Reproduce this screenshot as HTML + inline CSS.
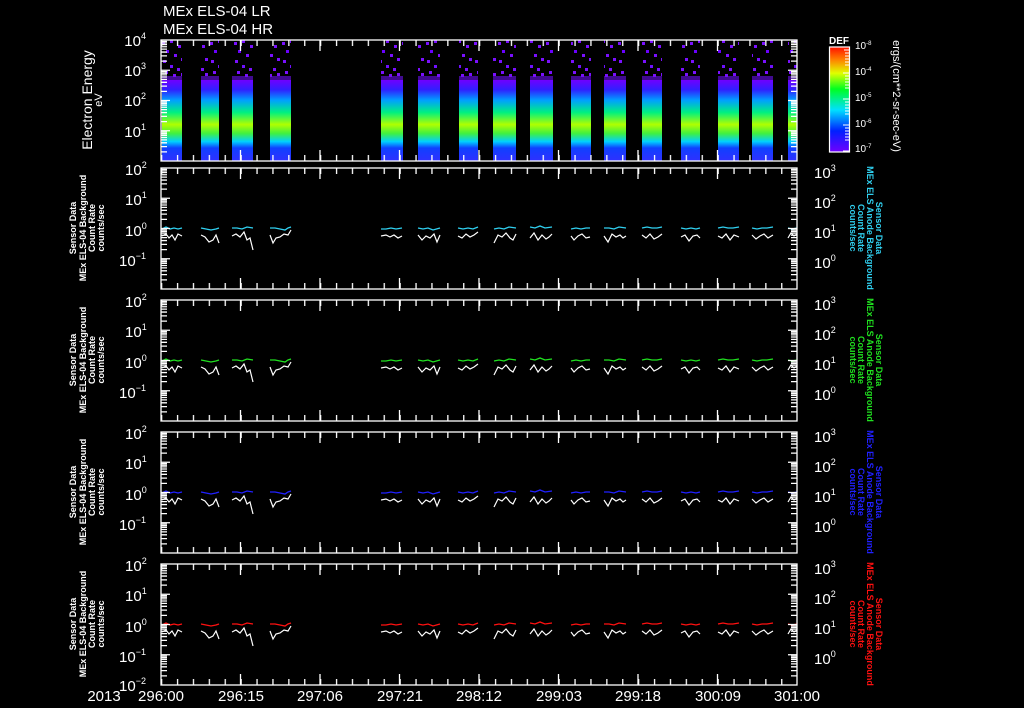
<!DOCTYPE html>
<html><head><meta charset="utf-8"><style>
html,body{margin:0;padding:0;background:#000;width:1024px;height:708px;overflow:hidden}
svg{display:block}
text{font-family:"Liberation Sans",sans-serif;fill:#fff}
</style></head><body>
<svg width="1024" height="708" viewBox="0 0 1024 708" xmlns="http://www.w3.org/2000/svg">
<defs>
<pattern id="mt" width="15.9" height="130" patternUnits="userSpaceOnUse"><rect x="0" y="0" width="1.3" height="6" fill="#fff"/><rect x="0" y="115" width="1.3" height="6" fill="#fff"/></pattern>
<pattern id="dots" width="24" height="40" patternUnits="userSpaceOnUse">
<rect x="1" y="2" width="3" height="3" fill="#7a10ff"/><rect x="9" y="0" width="3" height="3" fill="#7a10ff"/><rect x="17" y="5" width="3" height="3" fill="#7a10ff"/><rect x="5" y="10" width="3" height="3" fill="#6a00ff"/><rect x="13" y="14" width="3" height="3" fill="#7a10ff"/><rect x="20" y="18" width="3" height="3" fill="#7a10ff"/><rect x="2" y="20" width="3" height="3" fill="#7a10ff"/><rect x="9" y="25" width="3" height="3" fill="#7010ff"/><rect x="16" y="28" width="3" height="3" fill="#7a10ff"/><rect x="4" y="31" width="3" height="3" fill="#7a10ff"/><rect x="12" y="34" width="3" height="3" fill="#7a10ff"/><rect x="20" y="33" width="3" height="3" fill="#7a10ff"/><rect x="0" y="36" width="24" height="4" fill="#6a10f0" opacity=".6"/>
</pattern>
<linearGradient id="sg" x1="0" y1="0" x2="0" y2="1">
<stop offset="0" stop-color="#7000ff"/><stop offset=".12" stop-color="#3020ff"/><stop offset=".25" stop-color="#00a0ff"/><stop offset=".4" stop-color="#00f080"/><stop offset=".55" stop-color="#b0ff00"/><stop offset=".66" stop-color="#40f040"/><stop offset=".76" stop-color="#00d0ff"/><stop offset=".84" stop-color="#1040ff"/><stop offset="1" stop-color="#3030ff"/>
</linearGradient>
<g id="fr" fill="none" stroke="#fff" stroke-width="1.3">
<rect x="0" y="0" width="636" height="121"/>
<path d="M0 30.25h9M0 60.5h9M0 90.75h9M636 30.25h-9M636 60.5h-9M636 90.75h-9"/>
<path id="mn" d="M0 111.9h6M0 106.6h6M0 102.8h6M0 99.9h6M0 97.5h6M0 95.4h6M0 93.7h6M0 92.1h6M0 81.65h6M0 76.35h6M0 72.55h6M0 69.65h6M0 67.25h6M0 65.15h6M0 63.45h6M0 61.85h6M0 51.4h6M0 46.1h6M0 42.3h6M0 39.4h6M0 37h6M0 34.9h6M0 33.2h6M0 31.6h6M0 21.15h6M0 15.85h6M0 12.05h6M0 9.15h6M0 6.75h6M0 4.65h6M0 2.95h6M0 1.35h6"/>
<path d="M79.5 0v11M159 0v11M238.5 0v11M318 0v11M397.5 0v11M477 0v11M556.5 0v11M79.5 121v-11M159 121v-11M238.5 121v-11M318 121v-11M397.5 121v-11M477 121v-11M556.5 121v-11"/>
<use href="#mn" transform="translate(636,0) scale(-1,1)"/>
<rect x="0" y="0" width="636" height="121" fill="url(#mt)" stroke="none"/>
</g>
<g id="wl" fill="none" stroke="#fff" stroke-width="1.2">
<polyline points="1,68 5,66 8,70 11,67 14,72 17,66 21,68"/>
<polyline points="40,67 44,69 48,74 52,72 55,67 58,75"/>
<polyline points="71,68 75,66 79,69 83,64 86,72 89,70 92,82"/>
<polyline points="109,67 112,75 115,70 119,69 123,66 127,67 130,62"/>
<polyline points="220,68 225,67 229,69 233,67 237,70 241,68"/>
<polyline points="257,67 261,72 265,68 269,70 273,66 276,74 279,67"/>
<polyline points="297,68 301,70 305,66 309,69 313,67 317,64"/>
<polyline points="333,75 337,67 341,69 345,65 349,70 352,72 355,66"/>
<polyline points="369,70 373,65 377,72 381,67 385,71 388,69 391,66"/>
<polyline points="410,68 413,72 417,68 421,66 425,70 429,69"/>
<polyline points="443,68 447,74 451,66 455,69 459,67 462,70 465,68"/>
<polyline points="481,67 485,70 489,66 493,71 497,69 501,66"/>
<polyline points="520,69 524,67 528,73 532,68 536,67 539,70"/>
<polyline points="557,68 561,70 565,66 569,72 573,67 578,69"/>
<polyline points="591,67 595,71 599,68 603,66 607,70 612,67"/>
<polyline points="627,70 630,65 633,68 636,66"/>
</g>
<g id="cl" fill="none" stroke="currentColor" stroke-width="1.3" transform="translate(0,2)">
<polyline points="1,59 5,57 9,59 13,58 17,59 21,58"/>
<polyline points="40,58 45,59 50,60 55,59 58,58"/>
<polyline points="71,58 76,58 81,59 86,57 92,58"/>
<polyline points="109,58 114,58 119,59 124,60 127,58 130,57"/>
<polyline points="220,59 225,59 230,58 235,59 241,58"/>
<polyline points="257,58 262,59 267,58 272,60 279,58"/>
<polyline points="297,58 302,59 307,58 312,59 317,57"/>
<polyline points="333,59 338,58 343,59 348,57 355,58"/>
<polyline points="369,57 374,58 379,56 384,58 391,57"/>
<polyline points="410,59 415,58 420,59 425,58 429,58"/>
<polyline points="443,58 448,58 453,59 458,57 465,58"/>
<polyline points="481,58 486,57 491,58 496,58 501,57"/>
<polyline points="520,58 525,59 530,58 535,59 539,58"/>
<polyline points="557,58 562,57 567,58 572,58 578,57"/>
<polyline points="591,58 596,59 601,58 606,58 612,57"/>
<polyline points="627,58 631,59 636,58"/>
</g>
<linearGradient id="cb" x1="0" y1="1" x2="0" y2="0">
<stop offset="0" stop-color="#7000ff"/><stop offset=".2" stop-color="#0020ff"/><stop offset=".4" stop-color="#00e0ff"/><stop offset=".6" stop-color="#00ff20"/><stop offset=".75" stop-color="#e0ff00"/><stop offset=".88" stop-color="#ff8000"/><stop offset="1" stop-color="#ff1000"/>
</linearGradient>
</defs>

<text x="163" y="16" font-size="15">MEx ELS-04 LR</text>
<text x="163" y="34" font-size="15">MEx ELS-04 HR</text>

<g transform="translate(161,40)">
<g>
<rect x="1" y="0" width="20" height="40" fill="url(#dots)"/><rect x="1" y="40" width="20" height="81" fill="url(#sg)"/>
<rect x="40" y="0" width="18" height="40" fill="url(#dots)"/><rect x="40" y="40" width="18" height="81" fill="url(#sg)"/>
<rect x="71" y="0" width="21" height="40" fill="url(#dots)"/><rect x="71" y="40" width="21" height="81" fill="url(#sg)"/>
<rect x="109" y="0" width="21" height="40" fill="url(#dots)"/><rect x="109" y="40" width="21" height="81" fill="url(#sg)"/>
<rect x="220" y="0" width="22" height="40" fill="url(#dots)"/><rect x="220" y="40" width="22" height="81" fill="url(#sg)"/>
<rect x="257" y="0" width="22" height="40" fill="url(#dots)"/><rect x="257" y="40" width="22" height="81" fill="url(#sg)"/>
<rect x="298" y="0" width="19" height="40" fill="url(#dots)"/><rect x="298" y="40" width="19" height="81" fill="url(#sg)"/>
<rect x="332" y="0" width="23" height="40" fill="url(#dots)"/><rect x="332" y="40" width="23" height="81" fill="url(#sg)"/>
<rect x="369" y="0" width="23" height="40" fill="url(#dots)"/><rect x="369" y="40" width="23" height="81" fill="url(#sg)"/>
<rect x="410" y="0" width="20" height="40" fill="url(#dots)"/><rect x="410" y="40" width="20" height="81" fill="url(#sg)"/>
<rect x="443" y="0" width="22" height="40" fill="url(#dots)"/><rect x="443" y="40" width="22" height="81" fill="url(#sg)"/>
<rect x="481" y="0" width="20" height="40" fill="url(#dots)"/><rect x="481" y="40" width="20" height="81" fill="url(#sg)"/>
<rect x="520" y="0" width="19" height="40" fill="url(#dots)"/><rect x="520" y="40" width="19" height="81" fill="url(#sg)"/>
<rect x="557" y="0" width="21" height="40" fill="url(#dots)"/><rect x="557" y="40" width="21" height="81" fill="url(#sg)"/>
<rect x="591" y="0" width="21" height="40" fill="url(#dots)"/><rect x="591" y="40" width="21" height="81" fill="url(#sg)"/>
<rect x="627" y="0" width="9" height="40" fill="url(#dots)"/><rect x="627" y="40" width="9" height="81" fill="url(#sg)"/>
</g>
<use href="#fr"/>
</g>

<g transform="translate(161,168)"><use href="#wl"/><use href="#cl" style="color:#30d0f0"/><use href="#fr"/></g>
<g transform="translate(161,300)"><use href="#wl"/><use href="#cl" style="color:#20e020"/><use href="#fr"/></g>
<g transform="translate(161,432)"><use href="#wl"/><use href="#cl" style="color:#2020ff"/><use href="#fr"/></g>
<g transform="translate(161,564)"><use href="#wl"/><use href="#cl" style="color:#ff1010"/><use href="#fr"/></g>

<g font-size="15" text-anchor="end">
<text x="146" y="46">10<tspan font-size="9" dy="-7">4</tspan></text>
<text x="146" y="76">10<tspan font-size="9" dy="-7">3</tspan></text>
<text x="146" y="106">10<tspan font-size="9" dy="-7">2</tspan></text>
<text x="146" y="137">10<tspan font-size="9" dy="-7">1</tspan></text>
</g>
<g font-size="15" id="la">
<text x="125" y="175">10<tspan font-size="9" dy="-7">2</tspan></text>
<text x="125" y="205">10<tspan font-size="9" dy="-7">1</tspan></text>
<text x="125" y="236">10<tspan font-size="9" dy="-7">0</tspan></text>
<text x="119" y="266">10<tspan font-size="9" dy="-7">−1</tspan></text>
</g>
<use href="#la" y="132"/><use href="#la" y="264"/><use href="#la" y="396"/>
<text x="119" y="691" font-size="15">10<tspan font-size="9" dy="-7">−2</tspan></text>

<g font-size="15" id="ra">
<text x="814" y="178">10<tspan font-size="9" dy="-7">3</tspan></text>
<text x="814" y="208">10<tspan font-size="9" dy="-7">2</tspan></text>
<text x="814" y="238">10<tspan font-size="9" dy="-7">1</tspan></text>
<text x="814" y="268">10<tspan font-size="9" dy="-7">0</tspan></text>
</g>
<use href="#ra" y="132"/><use href="#ra" y="264"/><use href="#ra" y="396"/>

<text transform="translate(92,100) rotate(-90)" font-size="14" text-anchor="middle">Electron Energy</text>
<text transform="translate(102,100) rotate(-90)" font-size="11" text-anchor="middle">eV</text>
<g id="lt" font-size="9" font-weight="bold" text-anchor="middle">
<text transform="translate(76,228) rotate(-90)">Sensor Data</text>
<text transform="translate(86,228) rotate(-90)">MEx ELS-04 Background</text>
<text transform="translate(95,228) rotate(-90)">Count Rate</text>
<text transform="translate(104,228) rotate(-90)">counts/sec</text>
</g>
<use href="#lt" y="132"/><use href="#lt" y="264"/><use href="#lt" y="396"/>

<g font-size="9" font-weight="bold" text-anchor="middle">
<g style="fill:#30d0f0">
<text transform="translate(876,228) rotate(90)" style="fill:inherit">Sensor Data</text>
<text transform="translate(867,228) rotate(90)" style="fill:inherit">MEx ELS Anode Background</text>
<text transform="translate(858,228) rotate(90)" style="fill:inherit">Count Rate</text>
<text transform="translate(850,228) rotate(90)" style="fill:inherit">counts/sec</text>
</g>
<g style="fill:#20e020" transform="translate(0,132)">
<text transform="translate(876,228) rotate(90)" style="fill:inherit">Sensor Data</text>
<text transform="translate(867,228) rotate(90)" style="fill:inherit">MEx ELS Anode Background</text>
<text transform="translate(858,228) rotate(90)" style="fill:inherit">Count Rate</text>
<text transform="translate(850,228) rotate(90)" style="fill:inherit">counts/sec</text>
</g>
<g style="fill:#2020ff" transform="translate(0,264)">
<text transform="translate(876,228) rotate(90)" style="fill:inherit">Sensor Data</text>
<text transform="translate(867,228) rotate(90)" style="fill:inherit">MEx ELS Anode Background</text>
<text transform="translate(858,228) rotate(90)" style="fill:inherit">Count Rate</text>
<text transform="translate(850,228) rotate(90)" style="fill:inherit">counts/sec</text>
</g>
<g style="fill:#ff1010" transform="translate(0,396)">
<text transform="translate(876,228) rotate(90)" style="fill:inherit">Sensor Data</text>
<text transform="translate(867,228) rotate(90)" style="fill:inherit">MEx ELS Anode Background</text>
<text transform="translate(858,228) rotate(90)" style="fill:inherit">Count Rate</text>
<text transform="translate(850,228) rotate(90)" style="fill:inherit">counts/sec</text>
</g>
</g>

<text x="829" y="44" font-size="10" font-weight="bold">DEF</text>
<rect x="829.5" y="47" width="20" height="105" fill="url(#cb)" stroke="#fff" stroke-width="1.2"/>
<g stroke="#fff" stroke-width="1" fill="none"><path d="M849 50h-5M849 53h-4M849 56h-4M849 59h-4M849 62h-4M849 65h-4M849 73h-6M849 76h-4M849 79h-4M849 82h-4M849 85h-4M849 88h-4M849 99h-6M849 102h-4M849 105h-4M849 108h-4M849 111h-4M849 114h-4M849 125h-6M849 128h-4M849 131h-4M849 134h-4M849 137h-4M849 140h-4M849 151h-6"/></g>
<g font-size="10">
<text x="855" y="49">10<tspan font-size="6" dy="-4">-8</tspan></text>
<text x="855" y="75">10<tspan font-size="6" dy="-4">-4</tspan></text>
<text x="855" y="101">10<tspan font-size="6" dy="-4">-5</tspan></text>
<text x="855" y="127">10<tspan font-size="6" dy="-4">-6</tspan></text>
<text x="855" y="152">10<tspan font-size="6" dy="-4">-7</tspan></text>
</g>
<text transform="translate(893,96) rotate(90)" font-size="11" text-anchor="middle">ergs/(cm**2-sr-sec-eV)</text>

<g font-size="15" text-anchor="middle">
<text x="104" y="701">2013</text>
<text x="161" y="701">296:00</text>
<text x="241" y="701">296:15</text>
<text x="320" y="701">297:06</text>
<text x="400" y="701">297:21</text>
<text x="479" y="701">298:12</text>
<text x="559" y="701">299:03</text>
<text x="638" y="701">299:18</text>
<text x="718" y="701">300:09</text>
<text x="797" y="701">301:00</text>
</g>
</svg>
</body></html>
